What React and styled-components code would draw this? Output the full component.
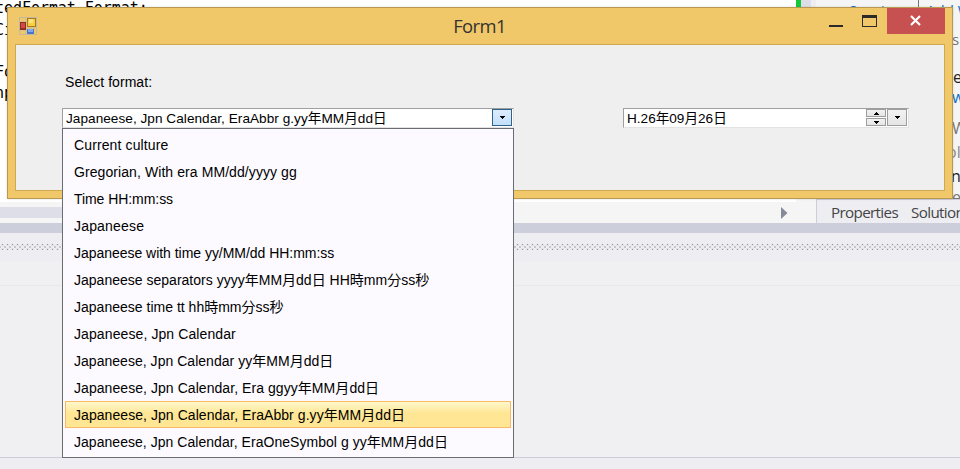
import React from "react";
import styled, { createGlobalStyle, css } from "styled-components";

const Global = createGlobalStyle`
  * { box-sizing: border-box; }
  html, body { margin: 0; padding: 0; overflow: hidden; }
  body { font-family: "Liberation Sans", "Noto Sans CJK JP", sans-serif; }
`;

const Desktop = styled.div`
  position: relative;
  width: 960px;
  height: 469px;
  overflow: hidden;
  background: #eeeef2;
`;

const Ide = styled.div`
  display: flex;
  flex-direction: column;
  height: 469px;
`;

const Workspace = styled.div`
  display: flex;
  height: 223px;
  background: #f5f5f5;
`;

const Editor = styled.div`
  display: flex;
  flex-direction: column;
  width: 796px;
  background: #fff;
`;

const Code = styled.div`
  flex: 1;
  overflow: hidden;
  white-space: pre;
  font: 15px/22px "DejaVu Sans Mono", monospace;
  letter-spacing: -0.05px;
  color: #000;
`;

const CodeLine = styled.div`
  height: 22px;
  margin-top: ${(p) => p.$gap || 0}px;
  margin-left: -5px;
`;

const ScrollTrack = styled.div`
  display: flex;
  align-items: center;
  justify-content: flex-end;
  height: 21px;
  background: #f5f5f5;
`;

const ScrollThumb = styled.div`
  width: 400px;
  height: 11px;
  margin-right: auto;
  background: #dedee8;
`;

const ScrollArrow = styled.svg`
  display: block;
  margin-right: 8px;
`;

const Gutter = styled.div`
  width: 20px;
  border-left: 5px solid #14c83c;
  background: linear-gradient(90deg, #dedee8 10px, #eeeef2 10px);
  height: 192px;
`;

const SidePanel = styled.div`
  display: flex;
  flex-direction: column;
  flex: 1;
  background: #f5f5f5;
  overflow: hidden;
`;

const SideBody = styled.div`
  display: flex;
  height: 199px;
  justify-content: flex-end;
  overflow: hidden;
  font: 14px/18px "Open Sans", sans-serif;
`;

const SideLeft = styled.div`
  flex: 1;
  padding: 2px 0 0 32px;
  color: #1070c4;
  border-right: 1px solid #777;
  white-space: nowrap;
`;

const SideRight = styled.div`
  width: 41px;
  position: relative;
  overflow: hidden;
  color: #1070c4;
`;

const Snippet = styled.span`
  position: absolute;
  left: ${(p) => p.$x}px;
  top: ${(p) => p.$y}px;
  color: ${(p) => p.$color};
  white-space: nowrap;
  font-size: ${(p) => p.$size || 15}px;
`;

const Tabs = styled.div`
  display: flex;
  gap: 13px;
  height: 24px;
  padding-left: 14px;
  border-left: 1px solid #cccedb;
  border-top: 1px solid #cccedb;
  background: #eeeef2;
  color: #444;
  font: 15.2px/25px "Open Sans", sans-serif;
  letter-spacing: -0.65px;
  white-space: nowrap;
`;

const Splitter = styled.div`
  height: 10px;
  background: #cccedb;
`;

const ToolHeader = styled.div`
  height: 28px;
  padding-top: 11px;
`;

const Grip = styled.svg`
  display: block;
`;

const ToolBar = styled.div`
  height: 25px;
  background: #f0f0f2;
  border-bottom: 1px solid #e8e8ec;
`;

const ToolBody = styled.div`
  height: 172px;
  background: #f0f0f2;
  border-bottom: 1px solid #cccedb;
`;

const FormWindow = styled.section`
  position: absolute;
  left: 7px;
  top: 7px;
  width: 946px;
  height: 192px;
  display: flex;
  flex-direction: column;
  padding: 0 7px 7px;
  border: 1px solid #b8994f;
  background: #f0c869;
  box-shadow: 0 0 2px rgba(0, 0, 0, 0.15);
`;

const TitleBar = styled.header`
  display: grid;
  grid-template-columns: 125px 1fr 125px;
  height: 36px;
`;

const AppIcon = styled.svg`
  margin: 9px 0 0 4px;
`;

const Title = styled.h1`
  margin: 0;
  padding-right: 1px;
  text-align: center;
  font: 400 18.4px/35px "Open Sans", sans-serif;
  letter-spacing: -0.6px;
  color: #333;
`;

const Controls = styled.div`
  display: flex;
  justify-content: flex-end;
`;

const CaptionButton = styled.button`
  width: ${(p) => p.$w}px;
  height: 26px;
  padding: 0;
  border: 0;
  background: ${(p) => (p.$close ? "#c75050" : "transparent")};
  svg { display: block; }
`;

const Client = styled.main`
  flex: 1;
  border: 1px solid #cfa84f;
  background: #efefef;
  padding: 27px 35px 0 46px;
`;

const Label = styled.div`
  padding-left: 3px;
  font-size: 14px;
  line-height: 20px;
  letter-spacing: 0.05px;
  color: #000;
`;

const Fields = styled.div`
  display: flex;
  justify-content: space-between;
  margin-top: 16px;
`;

const Field = styled.div`
  display: flex;
  width: ${(p) => p.$w}px;
  height: 20px;
  padding-right: 1px;
  border: 1px solid;
  border-color: #9f9f9f #e3e3e3 #e3e3e3 #9f9f9f;
  background: #fff;
`;

const mixed = css`
  font-family: "Liberation Sans", "Noto Sans CJK JP", sans-serif;
  color: #000;
  white-space: pre;
  letter-spacing: ${(p) => p.$track || 0}px;
`;

const FieldText = styled.span`
  ${mixed}
  flex: 1;
  padding-left: 3px;
  font-size: 13.6px;
  line-height: 19px;
`;

const Kanji = styled.span`
  font-family: "Noto Sans CJK JP", sans-serif;
  font-weight: 400;
  line-height: 1;
`;

const FieldButton = styled.button`
  display: flex;
  align-items: center;
  justify-content: center;
  width: 20px;
  height: ${(p) => p.$h || 17}px;
  padding: 0;
  border: 1px solid ${(p) => (p.$hot ? "#2c628b" : "#9d9d9d")};
  background: ${(p) => (p.$hot ? "linear-gradient(#dcebfc, #c4e0fc)" : "linear-gradient(#f2f2f2, #e5e5e5)")};
`;

const Spinner = styled.div`
  display: flex;
  flex-direction: column;
  gap: 1px;
  margin-right: 1px;
`;

const Menu = styled.ul`
  position: absolute;
  left: 62px;
  top: 128px;
  width: 452px;
  height: 330px;
  margin: 0;
  padding: 2px;
  list-style: none;
  border: 1px solid #6b6d75;
  background: #fcfaff;
`;

const MenuItem = styled.li`
  ${mixed}
  height: 27px;
  padding-left: 8px;
  border: 1px solid transparent;
  font-size: 14px;
  line-height: 26px;
  ${(p) =>
    p.$active &&
    css`
      border-color: #f9b967;
      background: linear-gradient(#fff8cc 0, #ffe694 45%, #ffe694 100%);
    `}
`;

const Mixed = ({ text }) =>
  text.split(/([年月日時分秒])/).map((part, i) => (i % 2 ? <Kanji key={i}>{part}</Kanji> : part));

const Arrow = ({ up }) => (
  <svg width="5" height="3" shapeRendering="crispEdges">
    <path d={up ? "M2 0h1v1h1v1h1v1H0V2h1V1h1z" : "M0 0h5v1H4v1H3v1H2V2H1V1H0z"} />
  </svg>
);

const items = [
  { text: "Current culture", track: 0.12 },
  { text: "Gregorian, With era MM/dd/yyyy gg", track: 0.08 },
  { text: "Time HH:mm:ss", track: -0.06 },
  { text: "Japaneese", track: 0.18 },
  { text: "Japaneese with time yy/MM/dd HH:mm:ss", track: -0.03 },
  { text: "Japaneese separators yyyy年MM月dd日 HH時mm分ss秒", track: 0.01 },
  { text: "Japaneese time tt hh時mm分ss秒", track: 0.01 },
  { text: "Japaneese, Jpn Calendar", track: 0.1 },
  { text: "Japaneese, Jpn Calendar yy年MM月dd日", track: 0.03 },
  { text: "Japaneese, Jpn Calendar, Era ggyy年MM月dd日", track: 0.06 },
  { text: "Japaneese, Jpn Calendar, EraAbbr g.yy年MM月dd日", track: 0.06 },
  { text: "Japaneese, Jpn Calendar, EraOneSymbol g yy年MM月dd日", track: 0.04 },
];

export default function App() {
  return (
    <Desktop>
      <Global />
      <Ide>
        <Workspace>
          <Editor>
            <Code>
              <CodeLine $gap={-3}>tedFormat.Format;</CodeLine>
              <CodeLine>Ci</CodeLine>
              <CodeLine $gap={20}>Fo</CodeLine>
              <CodeLine $gap={-1}>np</CodeLine>
            </Code>
            <ScrollTrack>
              <ScrollThumb />
              <ScrollArrow width="7" height="12">
                <path d="M0 0L6.5 6L0 12z" fill="#868999" />
              </ScrollArrow>
            </ScrollTrack>
          </Editor>
          <Gutter />
          <SidePanel>
            <SideBody>
              <SideLeft>Queries</SideLeft>
              <SideRight>
                <Snippet $x={7} $y={1} $color="#1070c4">Add W</Snippet>
                <Snippet $x={33} $y={30} $color="#777">s</Snippet>
                <Snippet $x={34} $y={68} $size={16} $color="#222">e</Snippet>
                <Snippet $x={33} $y={88} $size={16} $color="#1070c4">w</Snippet>
                <Snippet $x={26} $y={119} $size={16} $color="#777">_W</Snippet>
                <Snippet $x={28} $y={143} $size={16} $color="#8a8a8a">ols</Snippet>
                <Snippet $x={32} $y={167} $size={16} $color="#222">n</Snippet>
                <Snippet $x={33} $y={188} $size={16} $color="#777">e</Snippet>
              </SideRight>
            </SideBody>
            <Tabs>
              <span>Properties</span>
              <span>Solution</span>
            </Tabs>
          </SidePanel>
        </Workspace>
        <Splitter />
        <ToolHeader>
          <Grip width="960" height="6" shapeRendering="crispEdges">
            <defs>
              <pattern id="grip" width="5" height="6" patternUnits="userSpaceOnUse">
                <path d="M1 0h3v2H1zM1 4h3v2H1z" fill="#e3e3e5" />
                <path d="M2 0h1v1H2zM2 5h1v1H2z" fill="#949496" />
                <path d="M0 2h1v2H0zM4 2h1v2H4z" fill="#c8c8ca" />
              </pattern>
            </defs>
            <rect width="960" height="6" fill="url(#grip)" />
          </Grip>
        </ToolHeader>
        <ToolBar />
        <ToolBody />
      </Ide>

      <FormWindow>
        <TitleBar>
          <AppIcon width="18" height="18" viewBox="0 0 18 18">
            <path d="M.5 .5h17v17H.5zM.5 5h7M.5 13h7M7 .5v17M7 11h10" fill="none" stroke="#c4b9a0" />
            <rect x="1" y="5" width="6" height="8" fill="#8f2c2a" />
            <rect x="2" y="6" width="4" height="5" fill="#d14a42" />
            <rect x="8" y="1" width="9" height="9" fill="#a9791a" />
            <rect x="9" y="2" width="7" height="7" fill="#f7cf3f" />
            <rect x="10" y="2" width="4" height="4" fill="#fbe384" />
            <rect x="8" y="12" width="7" height="5" fill="#4a74c8" />
            <rect x="9" y="12" width="5" height="3" fill="#7fa8f0" />
          </AppIcon>
          <Title>Form1</Title>
          <Controls>
            <CaptionButton $w={34}>
              <svg width="34" height="26" shapeRendering="crispEdges"><path d="M9 17h14v2H9z" fill="#2b2b2b" /></svg>
            </CaptionButton>
            <CaptionButton $w={33}>
              <svg width="33" height="26" shapeRendering="crispEdges"><path d="M8 7h15v12H8zM9 10v8h13v-8z" fillRule="evenodd" fill="#2b2b2b" /></svg>
            </CaptionButton>
            <CaptionButton $w={58} $close>
              <svg width="58" height="26"><path d="M24 8l9 9M33 8l-9 9" stroke="#fff" strokeWidth="2.2" /></svg>
            </CaptionButton>
          </Controls>
        </TitleBar>
        <Client>
          <Label>Select format:</Label>
          <Fields>
            <Field $w={452}>
              <FieldText $track={0.04}><Mixed text={items[10].text} /></FieldText>
              <FieldButton $hot><Arrow /></FieldButton>
            </Field>
            <Field $w={286}>
              <FieldText><Mixed text="H.26年09月26日" /></FieldText>
              <Spinner>
                <FieldButton $h={8}><Arrow up /></FieldButton>
                <FieldButton $h={8}><Arrow /></FieldButton>
              </Spinner>
              <FieldButton><Arrow /></FieldButton>
            </Field>
          </Fields>
        </Client>
      </FormWindow>

      <Menu>
        {items.map(({ text, track }, i) => (
          <MenuItem key={text} $track={track} $active={i === 10}><Mixed text={text} /></MenuItem>
        ))}
      </Menu>
    </Desktop>
  );
}
